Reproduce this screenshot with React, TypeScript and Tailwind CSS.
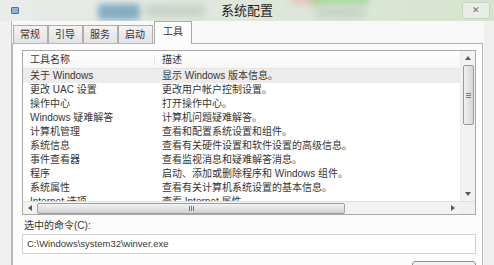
import React from "react";

const rows: [string, string][] = [
  ["关于 Windows", "显示 Windows 版本信息。"],
  ["更改 UAC 设置", "更改用户帐户控制设置。"],
  ["操作中心", "打开操作中心。"],
  ["Windows 疑难解答", "计算机问题疑难解答。"],
  ["计算机管理", "查看和配置系统设置和组件。"],
  ["系统信息", "查看有关硬件设置和软件设置的高级信息。"],
  ["事件查看器", "查看监视消息和疑难解答消息。"],
  ["程序", "启动、添加或删除程序和 Windows 组件。"],
  ["系统属性", "查看有关计算机系统设置的基本信息。"],
  ["Internet 选项", "查看 Internet 属性。"],
];

const tabs = ["常规", "引导", "服务", "启动"];

function Arrow({ dir }: { dir: "up" | "down" | "left" | "right" }) {
  const pts = {
    up: "0,4 3,0 6,4",
    down: "0,0 3,4 6,0",
    left: "4,0 0,3 4,6",
    right: "0,0 4,3 0,6",
  }[dir];
  const vert = dir === "up" || dir === "down";
  return (
    <svg width={vert ? 6 : 4} height={vert ? 4 : 6} viewBox={vert ? "0 0 6 4" : "0 0 4 6"}>
      <polygon points={pts} fill="#5a5a5a" />
    </svg>
  );
}

export default function App() {
  return (
    <div className="relative h-[265px] w-[494px] overflow-hidden bg-[#eef1ee] font-['Liberation_Sans','Noto_Sans_CJK_SC',sans-serif] text-[#363636]">
      {/* TITLE BAR */}
      <div className="relative h-[21px] overflow-hidden bg-gradient-to-r from-[#e9ecea] via-[#dfe7db] to-[#d6e4cc]">
        <div className="absolute left-[98px] top-[4px] h-[16px] w-[42px] rounded bg-[#5d93b3] opacity-70 blur-[3px]" />
        <div className="absolute left-[145px] top-[5px] h-[12px] w-[60px] rounded bg-[#b9c6bd] opacity-70 blur-[4px]" />
        <div className="absolute left-[290px] top-[-4px] h-[8px] w-[30px] rounded bg-[#e8b7b0] opacity-70 blur-[3px]" />
        <div className="absolute left-[310px] top-[-4px] h-[8px] w-[60px] rounded bg-[#8fd57f] opacity-70 blur-[3px]" />
        <div className="absolute left-[315px] top-[7px] h-[10px] w-[50px] rounded bg-[#b3c2b8] opacity-60 blur-[4px]" />
        <div className="relative grid h-full grid-cols-[1fr_auto_1fr] items-center">
          <div className="pl-[11px]">
            <div className="h-[7px] w-[8px] rounded-[1px] border border-[#4d6f9e] bg-[#8fb0d8]" />
          </div>
          <div className="text-[13px] leading-none text-[#1e1e1e]">系统配置</div>
          <div className="flex justify-end pr-[4px]">
            <div className="flex h-[17px] w-[28px] items-center justify-center rounded-[3px] border border-[#c9d2c6] bg-[#e8ede5] text-[9px] text-[#6b6b6b]">
              ✕
            </div>
          </div>
        </div>
      </div>

      {/* BODY */}
      <div className="flex h-[244px] pl-[11px] pr-[10px]">
        <div className="flex flex-1 flex-col border-l border-[#b7bbb9] bg-[#f8f8f8]">
          {/* TABS */}
          <div className="flex h-[27px] items-end pl-[1px]">
            {tabs.map((t) => (
              <div
                key={t}
                className="flex h-[18px] w-[35px] items-center border border-b-0 border-[#adadad] bg-gradient-to-b from-[#f3f3f3] to-[#e2e2e2] pl-[6px] text-[10px] leading-none"
              >
                {t}
              </div>
            ))}
            <div className="relative z-10 -mb-px ml-[1px] flex h-[23px] w-[38px] items-start border border-b-0 border-[#a9a9a9] bg-[#fcfcfc] pl-[8px] pt-[5px] text-[10px] leading-none">
              工具
            </div>
          </div>

          {/* PANEL */}
          <div className="mr-[1px] flex-1 border border-[#b4b4b4] bg-[#fcfcfc] pl-[9px] pr-[6px] pt-[6px]">
            {/* LIST VIEW */}
            <div className="flex h-[165px] flex-col border border-[#a8a8a8] bg-white">
              <div className="flex h-[150px]">
                <div className="flex-1 overflow-hidden text-[10px] leading-none">
                  <div className="flex h-[18px] items-center border-b border-[#e5e5e5] bg-gradient-to-b from-white to-[#f7f7f7]">
                    <div className="w-[132px] border-r border-[#e3e3e3] pl-[7px]">工具名称</div>
                    <div className="pl-[7px]">描述</div>
                  </div>
                  {rows.map(([name, desc], i) => (
                    <div
                      key={name}
                      className={`flex h-[14px] items-center ${i === 0 ? "bg-[#ececec]" : ""}`}
                    >
                      <div className="w-[132px] whitespace-nowrap pl-[7px]">{name}</div>
                      <div className="whitespace-nowrap pl-[7px]">{desc}</div>
                    </div>
                  ))}
                </div>
                {/* VERTICAL SCROLL */}
                <div className="flex w-[15px] flex-col items-center border-l border-[#ececec] bg-[#f2f2f2]">
                  <div className="flex h-[14px] items-center">
                    <Arrow dir="up" />
                  </div>
                  <div className="flex h-[60px] w-[11px] items-center justify-center rounded-[2px] border border-[#9a9a9a] bg-gradient-to-r from-[#f0f0f0] via-[#e4e4e4] to-[#d6d6d6]">
                    <div className="flex flex-col gap-[1px]">
                      <div className="h-px w-[5px] bg-[#7a7a7a]" />
                      <div className="h-px w-[5px] bg-[#7a7a7a]" />
                      <div className="h-px w-[5px] bg-[#7a7a7a]" />
                    </div>
                  </div>
                  <div className="flex-1" />
                  <div className="flex h-[14px] items-center">
                    <Arrow dir="down" />
                  </div>
                </div>
              </div>
              {/* HORIZONTAL SCROLL */}
              <div className="flex h-[13px] border-t border-[#e0e0e0]">
                <div className="flex flex-1 items-center bg-[#f2f2f2]">
                  <div className="flex w-[14px] justify-center">
                    <Arrow dir="left" />
                  </div>
                  <div className="flex h-[11px] w-[308px] items-center justify-center rounded-[2px] border border-[#a0a0a0] bg-gradient-to-b from-[#f2f2f2] via-[#e2e2e2] to-[#cfcfcf]">
                    <div className="flex gap-[1px]">
                      <div className="h-[5px] w-px bg-[#7a7a7a]" />
                      <div className="h-[5px] w-px bg-[#7a7a7a]" />
                      <div className="h-[5px] w-px bg-[#7a7a7a]" />
                    </div>
                  </div>
                  <div className="flex-1" />
                  <div className="flex w-[14px] justify-center">
                    <Arrow dir="right" />
                  </div>
                </div>
                <div className="w-[15px] bg-[#f0f0f0]" />
              </div>
            </div>

            {/* COMMAND */}
            <div className="mt-[4px] pl-[2px] text-[10px] leading-[14px]">选中的命令(C):</div>
            <div className="mt-[1px] flex h-[20px] items-center border border-[#cfcfcf] bg-white pl-[4px] text-[9.5px]">
              C:\Windows\system32\winver.exe
            </div>
            <div className="mt-[7px] flex justify-end">
              <div className="h-[20px] w-[64px] rounded-[3px] border border-[#8c8c8c] bg-gradient-to-b from-[#f4f4f4] to-[#dedede]" />
            </div>
          </div>
        </div>
      </div>
    </div>
  );
}
